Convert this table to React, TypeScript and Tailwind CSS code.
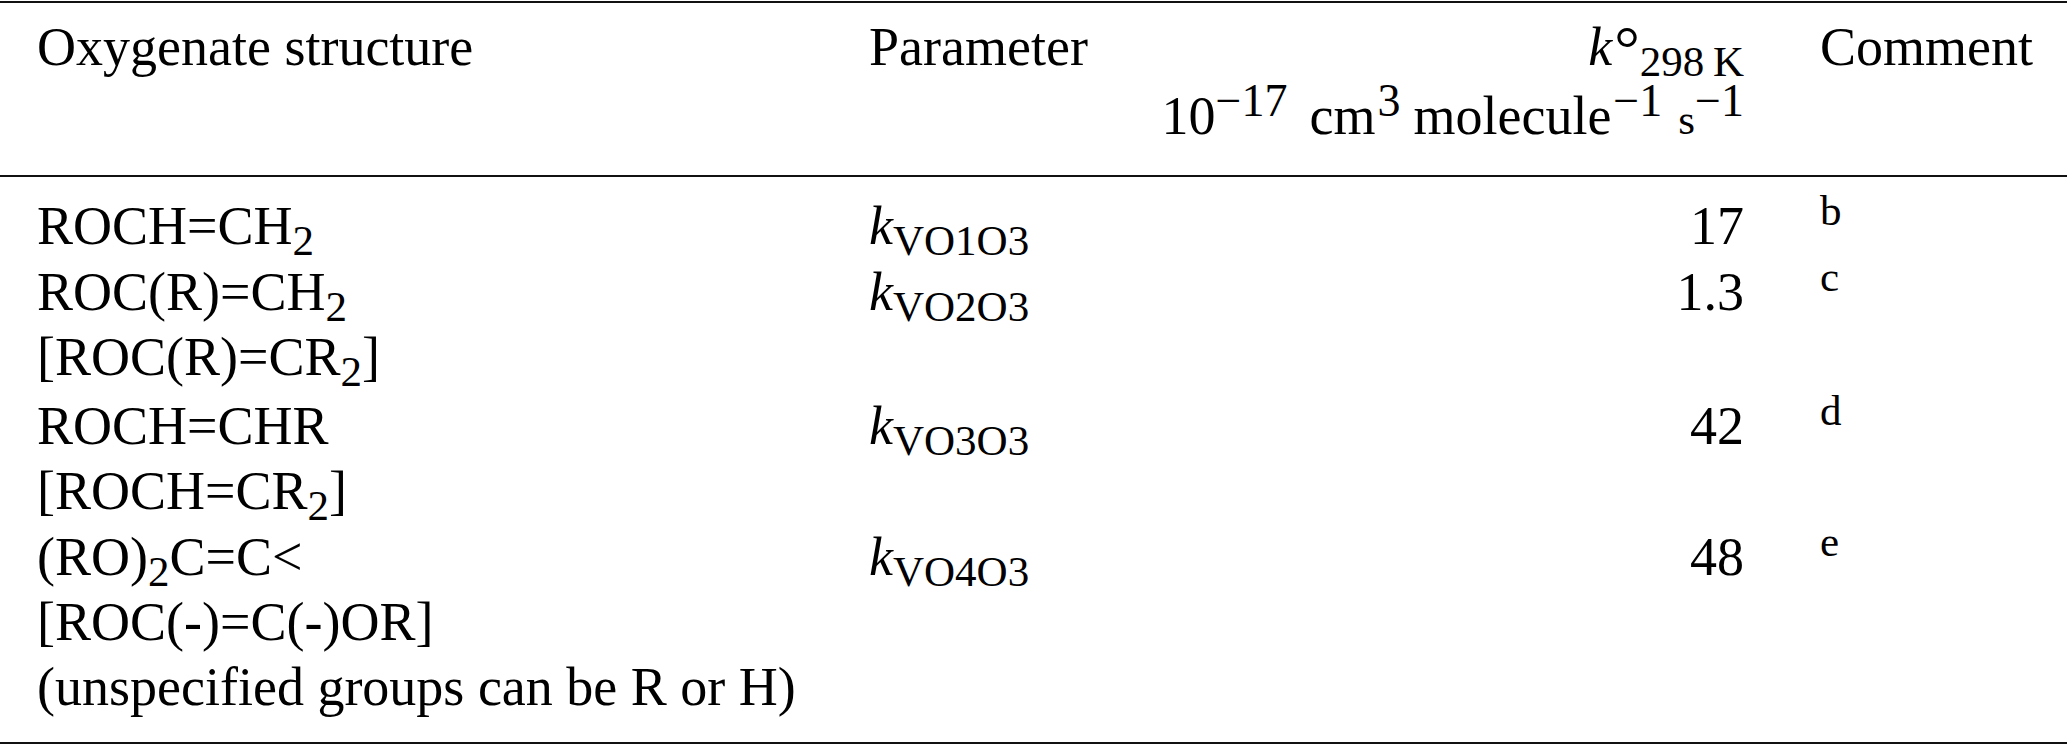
import React from "react";

const Sub = ({ children }: { children: React.ReactNode }) => (
  <span className="text-[43px] leading-[0] align-[-11px]">{children}</span>
);

const Sup = ({ children, className = "" }: { children: React.ReactNode; className?: string }) => (
  <span className={`text-[46px] leading-[0] align-[18px] ${className}`}>{children}</span>
);

const Note = ({ children }: { children: React.ReactNode }) => (
  <span className="text-[43px] leading-[0] align-[19px]">{children}</span>
);

const rows = [
  {
    h: "h-[66px]",
    lines: [<>ROCH=CH<Sub>2</Sub></>],
    param: "VO1O3",
    value: "17",
    note: "b",
  },
  {
    h: "h-[134px]",
    lines: [<>ROC(R)=CH<Sub>2</Sub></>, <>[ROC(R)=CR<Sub>2</Sub>]</>],
    param: "VO2O3",
    value: "1.3",
    note: "c",
  },
  {
    h: "h-[131px]",
    lines: [<>ROCH=CHR</>, <>[ROCH=CR<Sub>2</Sub>]</>],
    param: "VO3O3",
    value: "42",
    note: "d",
  },
  {
    h: "h-[195px]",
    lines: [
      <>(RO)<Sub>2</Sub>C=C&lt;</>,
      <>[ROC(-)=C(-)OR]</>,
      <>(unspecified groups can be R or H)</>,
    ],
    param: "VO4O3",
    value: "48",
    note: "e",
  },
];

export default function App() {
  return (
    <div className="w-[2067px] h-[744px] bg-white text-black font-['Liberation_Serif','Times_New_Roman',serif] text-[54px]">
      <div className="mt-px border-t-2 border-[#111]" />

      <div className="grid grid-cols-[832px_280px_595px_1fr] pl-[37px] pt-[10px] pb-[21px] leading-[69px]">
        <div>Oxygenate structure</div>
        <div>Parameter</div>
        <div className="text-right whitespace-nowrap">
          <div>
            <i>k</i>
            <span className="ml-[2px] text-[64px] font-light leading-[0] align-[-5px]">°</span>
            <span className="text-[43px] leading-[0] align-[-11px]">298&thinsp;K</span>
          </div>
          <div>
            10<Sup>−17</Sup>
            <span className="ml-[22px]">cm</span>
            <Sup className="ml-[2px]">3</Sup>
            <span className="ml-[13px]">molecule</span>
            <Sup className="ml-[2px]">−1</Sup>
            <span className="ml-[16px] text-[43px]">s</span>
            <Sup>−1</Sup>
          </div>
        </div>
        <div className="pl-[76px]">Comment</div>
      </div>

      <div className="border-t-2 border-[#111]" />

      <div className="pt-[17px] pb-[22px] leading-[65px]">
        {rows.map((r) => (
          <div key={r.param} className={`grid grid-cols-[832px_280px_595px_1fr] pl-[37px] ${r.h}`}>
            <div className="whitespace-nowrap">
              {r.lines.map((l, i) => (
                <div key={i}>{l}</div>
              ))}
            </div>
            <div className="whitespace-nowrap">
              <i>k</i>
              <Sub>{r.param}</Sub>
            </div>
            <div className="text-right">{r.value}</div>
            <div className="pl-[76px]">
              <Note>{r.note}</Note>
            </div>
          </div>
        ))}
      </div>

      <div className="border-t-2 border-[#111]" />
    </div>
  );
}
